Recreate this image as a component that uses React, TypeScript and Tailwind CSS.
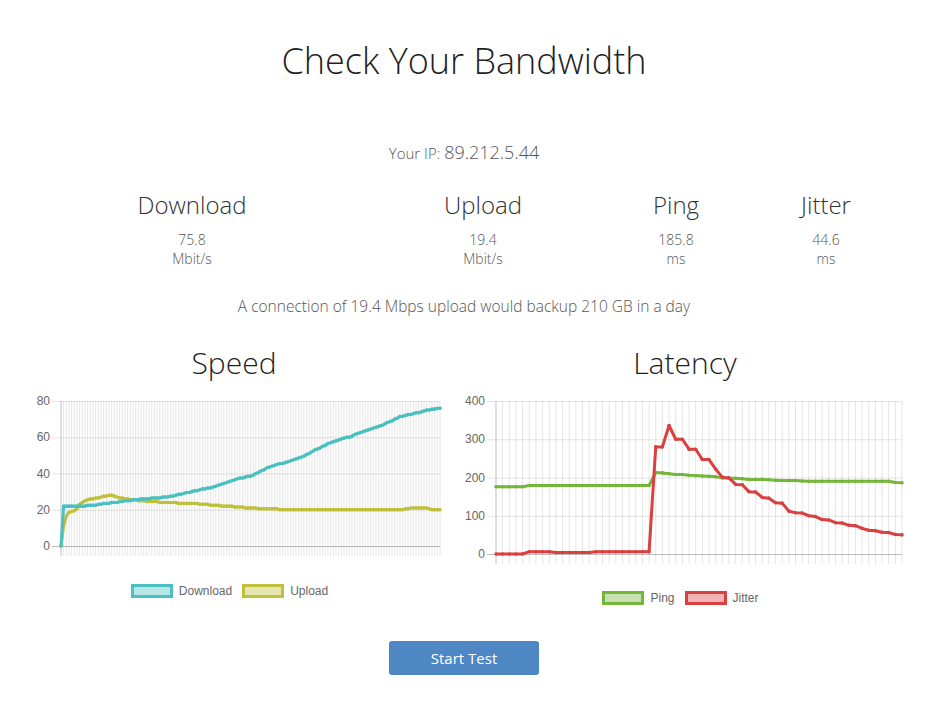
import { useMemo } from "react";

type Pt = [number, number];

// linear interpolation over [x, value] keypoints
const interp = (kps: Pt[], x: number) => {
  if (x <= kps[0][0]) return kps[0][1];
  for (let i = 1; i < kps.length; i++) {
    if (x <= kps[i][0]) {
      const [x0, v0] = kps[i - 1];
      const [x1, v1] = kps[i];
      return v0 + ((x - x0) / (x1 - x0)) * (v1 - v0);
    }
  }
  return kps[kps.length - 1][1];
};

const dlKeys: Pt[] = [
  [61, 0], [63.6, 22], [83, 22], [100, 23], [133, 25.4], [167, 27], [187, 29.4],
  [217, 33], [233, 36.4], [253, 39], [267, 43], [283, 45.8], [300, 48.5], [317, 53.5],
  [333, 57.6], [350, 60.3], [367, 64], [383, 66.8], [400, 71.3], [417, 73.5], [433, 75.6], [440, 76],
];

const ulKeys: Pt[] = [
  [61, 0], [63.6, 11], [66.7, 17], [70, 19], [76.7, 19.9], [80, 23.6], [86.7, 25.4],
  [110, 28], [117, 27], [133, 25.4], [150, 24.5], [167, 24], [200, 23.2], [233, 21.7],
  [267, 20.4], [300, 20], [400, 20], [410, 20.8], [427, 20.8], [433, 20], [440, 20],
];

const ping = [
  176, 176, 176, 176, 176, 179, 179, 179, 179, 179, 179, 179, 179, 179, 179, 179, 179, 179, 179, 179,
  179, 179, 179, 179, 213, 212, 210, 208, 208, 206, 205, 204, 203, 202, 199, 198, 198, 197, 195, 195,
  195, 194, 193, 192, 192, 192, 191, 190, 190, 190, 190, 190, 190, 190, 190, 190, 190, 190, 190, 190,
  187, 186,
];

const jitter = [
  0, 0, 0, 0, 0, 6, 6, 6, 6, 4, 4, 4, 4, 4, 4, 6, 6, 6, 6, 6, 6, 6, 6, 6,
  280, 280, 336, 300, 300, 274, 274, 247, 247, 222, 201, 199, 182, 181, 163, 162,
  148, 146, 134, 133, 112, 108, 107, 100, 98, 90, 89, 82, 81, 75, 74, 67, 62, 61, 57, 56, 51, 50,
];

type Series = { values: number[]; color: string };

type ChartProps = {
  width: number;
  height: number;
  x0: number;
  x1: number;
  yTop: number;
  yZero: number;
  max: number;
  ticks: number[];
  count: number;
  series: Series[];
};

const LineChart = ({ width, height, x0, x1, yTop, yZero, max, ticks, count, series }: ChartProps) => {
  const step = (x1 - x0) / (count - 1);
  const toY = (v: number) => yZero - (v / max) * (yZero - yTop);
  return (
    <svg width={width} height={height} className="block">
      {Array.from({ length: count }, (_, i) => (
        <line
          key={i}
          x1={x0 + i * step}
          x2={x0 + i * step}
          y1={yTop}
          y2={yZero + 10}
          stroke={i === 0 ? "rgba(0,0,0,0.25)" : "rgba(0,0,0,0.1)"}
          strokeWidth={1}
        />
      ))}
      {ticks.map((t) => (
        <g key={t}>
          <line
            x1={x0 - 9}
            x2={x1}
            y1={toY(t) + 0.5}
            y2={toY(t) + 0.5}
            stroke={t === 0 ? "rgba(0,0,0,0.25)" : "rgba(0,0,0,0.1)"}
          />
          <text
            x={x0 - 11}
            y={toY(t) + 4}
            textAnchor="end"
            fontSize={12}
            fill="#666"
            fontFamily="'Liberation Sans', Arial, sans-serif"
          >
            {t}
          </text>
        </g>
      ))}
      {series.map((s) => {
        const pts = s.values.map((v, i) => [x0 + i * step, toY(v)] as Pt);
        return (
          <g key={s.color}>
            <polyline
              points={pts.map((p) => p.join(",")).join(" ")}
              fill="none"
              stroke={s.color}
              strokeWidth={3}
              strokeLinejoin="round"
            />
            {pts.map((p, i) => (
              <circle key={i} cx={p[0]} cy={p[1]} r={1.8} fill={s.color} />
            ))}
          </g>
        );
      })}
    </svg>
  );
};

const LegendItem = ({ label, border, fill }: { label: string; border: string; fill: string }) => (
  <div className="flex items-center gap-[6px]">
    <span className="block w-[42px] h-[14px] border-[3px]" style={{ borderColor: border, backgroundColor: fill }} />
    <span className="text-[12px] leading-[14px] text-[#666] font-['Liberation_Sans',Arial,sans-serif]">{label}</span>
  </div>
);

const Stat = ({ label, value, unit }: { label: string; value: string; unit: string }) => (
  <div className="w-[150px] text-center">
    <div className="text-[24px] leading-[32px] font-light text-[#333]">{label}</div>
    <div className="mt-[10px] text-[14px] leading-[18px] font-light text-[#555]">{value}</div>
    <div className="mt-[1px] text-[14px] leading-[18px] font-light text-[#555]">{unit}</div>
  </div>
);

const App = () => {
  const speed = useMemo(() => {
    const n = 143;
    const xs = Array.from({ length: n }, (_, i) => 61 + (i * 379) / (n - 1));
    const q = (v: number) => Math.round(v * 2) / 2;
    return {
      dl: xs.map((x) => q(interp(dlKeys, x))),
      ul: xs.map((x) => q(interp(ulKeys, x))),
    };
  }, []);

  return (
    <div className="min-h-screen bg-white font-['Open_Sans',sans-serif]">
      <div className="w-[928px]">
        <h1 className="pt-[39px] text-center text-[36px] leading-[43px] font-light text-[#1f1f1f]">
          Check Your Bandwidth
        </h1>

        <p className="mt-[58px] text-center leading-[24px] font-light text-[#555]">
          <span className="text-[15px]">Your IP: </span>
          <span className="text-[18px]">89.212.5.44</span>
        </p>

        <div className="mt-[24px] flex pl-[117px]">
          <Stat label="Download" value="75.8" unit="Mbit/s" />
          <div className="ml-[141px]">
            <Stat label="Upload" value="19.4" unit="Mbit/s" />
          </div>
          <div className="ml-[43px]">
            <Stat label="Ping" value="185.8" unit="ms" />
          </div>
          <Stat label="Jitter" value="44.6" unit="ms" />
        </div>

        <p className="mt-[28px] text-center text-[15.5px] leading-[20px] font-light text-[#555]">
          A connection of 19.4 Mbps upload would backup 210 GB in a day
        </p>

        <div className="mt-[29px] flex items-start gap-[14px] pl-[20px]">
          <div className="w-[428px] flex flex-col">
            <h2 className="text-center text-[30px] leading-[36px] font-light text-[#1f1f1f]">Speed</h2>
            <div className="mt-[14px]">
              <LineChart
                width={428}
                height={170}
                x0={41}
                x1={420}
                yTop={6}
                yZero={151}
                max={80}
                ticks={[0, 20, 40, 60, 80]}
                count={143}
                series={[
                  { values: speed.ul, color: "rgb(192,192,60)" },
                  { values: speed.dl, color: "rgb(75,192,192)" },
                ]}
              />
            </div>
            <div className="mt-[19px] flex justify-center gap-[10px] pr-[9px]">
              <LegendItem label="Download" border="rgb(75,192,192)" fill="rgba(75,192,192,0.4)" />
              <LegendItem label="Upload" border="rgb(192,192,60)" fill="rgba(192,192,60,0.4)" />
            </div>
          </div>

          <div className="w-[446px] flex flex-col">
            <h2 className="text-center text-[30px] leading-[36px] font-light text-[#1f1f1f]">Latency</h2>
            <div className="mt-[14px]">
              <LineChart
                width={446}
                height={175}
                x0={34}
                x1={440}
                yTop={6}
                yZero={159}
                max={400}
                ticks={[0, 100, 200, 300, 400]}
                count={62}
                series={[
                  { values: ping, color: "rgb(116,182,58)" },
                  { values: jitter, color: "rgb(218,64,64)" },
                ]}
              />
            </div>
            <div className="mt-[21px] flex justify-center gap-[10px] pr-[9px]">
              <LegendItem label="Ping" border="rgb(116,182,58)" fill="rgba(116,182,58,0.4)" />
              <LegendItem label="Jitter" border="rgb(218,64,64)" fill="rgba(218,64,64,0.4)" />
            </div>
          </div>
        </div>

        <button className="mt-[36px] mx-auto block w-[150px] h-[34px] rounded-[3px] bg-[#4f86c4] text-white text-[15px] leading-[34px]">
          Start Test
        </button>
      </div>
    </div>
  );
};

export default App;
